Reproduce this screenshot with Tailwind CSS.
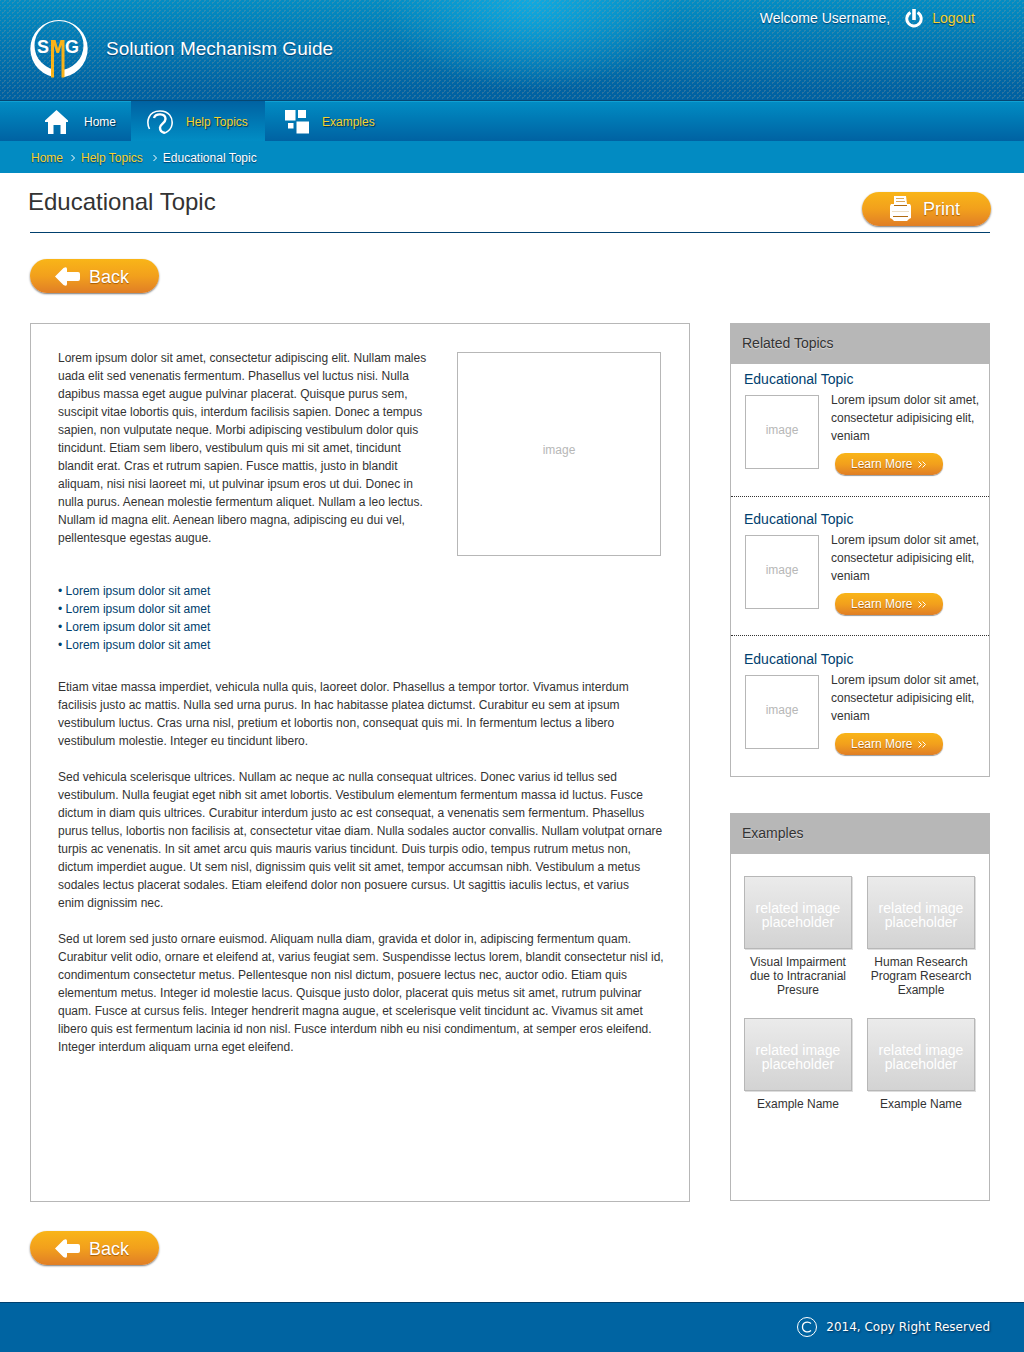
<!DOCTYPE html>
<html lang="en">
<head>
<meta charset="utf-8">
<meta name="viewport" content="width=device-width, initial-scale=1">
<title>Educational Topic - Solution Mechanism Guide</title>
<script src="https://cdn.jsdelivr.net/npm/@tailwindcss/browser@4"></script>
</head>
<body class="flex min-h-screen flex-col bg-white font-['Liberation_Sans',Arial,sans-serif] text-xs leading-[18px] text-[#333]">

<header>
  <div class="flex h-[101px] items-start justify-between border-b border-[#064672] pr-[49px] pl-[30px] [background-image:radial-gradient(circle,#8a9a9a50_1px,transparent_1px),radial-gradient(circle,#8a9a9a50_1px,transparent_1px),radial-gradient(ellipse_150px_90px_at_52%_0,#10a9e0,#10a9e080_50%,transparent),linear-gradient(#028dc4,#0062a2_90%)] [background-position:0_0,2px_3px,0_0,0_0] [background-size:5px_5px,5px_5px,auto,auto]">
    <a href="#" class="flex items-center gap-[18px] pt-5 text-[19px] leading-6 text-white">
      <svg class="h-[58px] w-[58px]" viewBox="0 0 58 58" role="img" aria-label="SMG">
        <clipPath id="legs"><path d="M0 0H58V58H34V44H22V58H0Z"/></clipPath>
        <path clip-path="url(#legs)" fill="#fff" fill-rule="evenodd" d="M29 0a28.700 28.700 0 1 1 0 57.400A28.700 28.700 0 1 1 29 0Zm0 1a24.500 24.500 0 1 0 0 49A24.500 24.500 0 1 0 29 1Z"/>
        <text x="7" y="33" font-size="18" font-weight="700" fill="#fff">S</text>
        <text x="35" y="33" font-size="18" font-weight="700" fill="#fff">G</text>
        <path fill="#f9b218" d="M21 20h4.500l2.500 8.500L30.500 20h4v37.500h-3V25L29 33h-2.500L24 25v32.500h-3Z"/>
      </svg>
      <span class="[text-shadow:0_1px_1px_#003f6f]">Solution Mechanism Guide</span>
    </a>
    <div class="flex items-center pt-2 text-sm leading-5 text-white [text-shadow:0_1px_1px_#003f6f]">
      <span>Welcome Username,</span>
      <a href="#" class="ml-[15px] flex items-center gap-[9px] text-[#f5d330]">
        <svg class="h-5 w-[18px]" viewBox="0 0 18 20" fill="none" stroke="#fff" aria-hidden="true"><path stroke-width="3" d="M5.500 4.500a7.200 7.200 0 1 0 7 0"/><path stroke-width="3.600" d="M9 1v11"/></svg>
        Logout
      </a>
    </div>
  </div>

  <nav aria-label="Main" class="flex h-10 bg-linear-to-b from-[#028dc4] to-[#0062a2] pl-[30px] text-[#f5d330] shadow-[inset_0_1px_0_#10a0d3] [text-shadow:1px_1px_1px_#003050]">
    <a href="#" class="flex w-[101px] items-center gap-[15px] pt-px pl-[15px] text-white">
      <svg class="h-6 w-6" viewBox="0 0 24 24" fill="#fff" aria-hidden="true"><path d="M11.500 0 23 10.500V12h-2v12h-5.500v-9H8.500v9H3V12H0v-1.500Z"/></svg>
      Home
    </a>
    <a href="#" aria-current="page" class="flex w-[134px] items-center gap-3 bg-linear-to-b from-[#0062a2] to-[#028dc4] pt-px pl-4">
      <svg class="h-6 w-[27px]" viewBox="0 0 27 24" fill="none" stroke="#fff" aria-hidden="true"><path stroke-width="1.600" d="M2.500 19C-1 12 1 1 13 1c9 0 13 6.500 12 13.500-.6 4.500-4 7-7 8.500"/><path stroke-width="2.400" d="M7 8c1.500-5 11.500-5 11.500 1 0 4-5.500 5-5.500 8.500 0 3.500 2 5 5 5.500"/></svg>
      Help Topics
    </a>
    <a href="#" class="flex items-center gap-[13px] pt-px pl-5">
      <svg class="h-6 w-6" viewBox="0 0 24 24" fill="#fff" aria-hidden="true"><path d="M0 0h10.500v10.500H0zM13 0h8v8h-8zM3 13h5.500v5.500H3zM11.500 11.500H24V23.500H11.500z"/></svg>
      Examples
    </a>
  </nav>

  <nav aria-label="Breadcrumb" class="flex h-8 items-center bg-[#028bc2] pt-px pl-[31px] text-[#f5d330] [text-shadow:0_1px_1px_#003f6f]">
    <a href="#">Home</a>
    <svg class="mr-1.5 ml-2 h-2 w-1" viewBox="0 0 4 8" fill="none" stroke="#fff" aria-hidden="true"><path d="M.5 1l3 3-3 3"/></svg>
    <a href="#">Help Topics</a>
    <svg class="mr-1.5 ml-2.5 h-2 w-1" viewBox="0 0 4 8" fill="none" stroke="#fff" aria-hidden="true"><path d="M.5 1l3 3-3 3"/></svg>
    <span class="text-white" aria-current="page">Educational Topic</span>
  </nav>
</header>

<main class="grow pr-[34px] pl-[30px]">
  <div class="flex h-[60px] items-center justify-between border-b border-[#00406e]">
    <h1 class="-ml-0.5 pb-0.5 text-2xl leading-8 text-[#333]">Educational Topic</h1>
    <button type="button" class="mt-3 -mr-px flex h-[34px] w-[129px] items-center gap-3 rounded-full bg-linear-to-b from-[#f9b518] via-[#f2a01c] to-[#e07e25] pl-7 text-lg leading-6 text-white shadow-[0_1px_2px_#0008] [text-shadow:0_1px_1px_#a85b00]">
      <svg class="h-[26px] w-[21px]" viewBox="0 0 21 26" aria-hidden="true"><path fill="#fff" d="M4 0h12l1 8h3l1 2v12l-2 1-2 2H4l-2-2-2-1V10l1-2h3Z"/><path stroke="#dba85c" d="M6 2.500h8M6 5.500h9"/><path stroke="#eedfc4" d="M2 15.500h17"/><path stroke="#b06a10" d="M4 9.500h13M3 20.500h15"/></svg>
      Print
    </button>
  </div>

  <button type="button" class="mt-[26px] flex h-[34px] w-[129px] items-center gap-2 rounded-full bg-linear-to-b from-[#f9b518] via-[#f2a01c] to-[#e07e25] pt-px pl-[25px] text-lg leading-6 text-white shadow-[0_1px_2px_#0008] [text-shadow:0_1px_1px_#a85b00]">
    <svg class="h-5 w-[26px]" viewBox="0 0 26 20" aria-hidden="true"><path fill="#fff" d="M0 9.500 8.500 1q3.500-2 3.500 1v3h11q2 0 2 2v5q0 2-2 2H12v3q0 3-3.500 1Z"/></svg>
    Back
  </button>

  <div class="mt-[30px] flex items-start gap-10">
    <article class="min-h-[879px] min-w-0 grow border border-[#b7b7b7] px-[27px] pt-[25px] pb-12">
      <div class="flex items-start justify-between">
        <p>Lorem ipsum dolor sit amet, consectetur adipiscing elit. Nullam males<br>uada elit sed venenatis fermentum. Phasellus vel luctus nisi. Nulla<br>dapibus massa eget augue pulvinar placerat. Quisque purus sem,<br>suscipit vitae lobortis quis, interdum facilisis sapien. Donec a tempus<br>sapien, non vulputate neque. Morbi adipiscing vestibulum dolor quis<br>tincidunt. Etiam sem libero, vestibulum quis mi sit amet, tincidunt<br>blandit erat. Cras et rutrum sapien. Fusce mattis, justo in blandit<br>aliquam, nisi nisi laoreet mi, ut pulvinar ipsum eros ut dui. Donec in<br>nulla purus. Aenean molestie fermentum aliquet. Nullam a leo lectus.<br>Nullam id magna elit. Aenean libero magna, adipiscing eu dui vel,<br>pellentesque egestas augue.</p>
        <div class="mt-[3px] mr-px flex h-[204px] w-[204px] shrink-0 items-center justify-center border border-[#b7b7b7] pb-2 text-[#b7b7b7]">image</div>
      </div>
      <ul class="mt-[26px] text-[#00406e]">
        <li>• <a href="#">Lorem ipsum dolor sit amet</a></li>
        <li>• <a href="#">Lorem ipsum dolor sit amet</a></li>
        <li>• <a href="#">Lorem ipsum dolor sit amet</a></li>
        <li>• <a href="#">Lorem ipsum dolor sit amet</a></li>
      </ul>
      <div class="-mr-4 mt-6 space-y-[18px]">
        <p>Etiam vitae massa imperdiet, vehicula nulla quis, laoreet dolor. Phasellus a tempor tortor. Vivamus interdum<br>facilisis justo ac mattis. Nulla sed urna purus. In hac habitasse platea dictumst. Curabitur eu sem at ipsum<br>vestibulum luctus. Cras urna nisl, pretium et lobortis non, consequat quis mi. In fermentum lectus a libero<br>vestibulum molestie. Integer eu tincidunt libero.</p>
        <p>Sed vehicula scelerisque ultrices. Nullam ac neque ac nulla consequat ultrices. Donec varius id tellus sed<br>vestibulum. Nulla feugiat eget nibh sit amet lobortis. Vestibulum elementum fermentum massa id luctus. Fusce<br>dictum in diam quis ultrices. Curabitur interdum justo ac est consequat, a venenatis sem fermentum. Phasellus<br>purus tellus, lobortis non facilisis at, consectetur vitae diam. Nulla sodales auctor convallis. Nullam volutpat ornare<br>turpis ac venenatis. In sit amet arcu quis mauris varius tincidunt. Duis turpis odio, tempus rutrum metus non,<br>dictum imperdiet augue. Ut sem nisl, dignissim quis velit sit amet, tempor accumsan nibh. Vestibulum a metus<br>sodales lectus placerat sodales. Etiam eleifend dolor non posuere cursus. Ut sagittis iaculis lectus, et varius<br>enim dignissim nec.</p>
        <p>Sed ut lorem sed justo ornare euismod. Aliquam nulla diam, gravida et dolor in, adipiscing fermentum quam.<br>Curabitur velit odio, ornare et eleifend at, varius feugiat sem. Suspendisse lectus lorem, blandit consectetur nisl id,<br>condimentum consectetur metus. Pellentesque non nisl dictum, posuere lectus nec, auctor odio. Etiam quis<br>elementum metus. Integer id molestie lacus. Quisque justo dolor, placerat quis metus sit amet, rutrum pulvinar<br>quam. Fusce at cursus felis. Integer hendrerit magna augue, et scelerisque velit tincidunt ac. Vivamus sit amet<br>libero quis est fermentum lacinia id non nisl. Fusce interdum nibh eu nisi condimentum, at semper eros eleifend.<br>Integer interdum aliquam urna eget eleifend.</p>
      </div>
    </article>

    <aside class="flex w-[260px] shrink-0 flex-col gap-9">
      <section class="border border-[#b7b7b7]">
        <h2 class="flex h-10 items-center bg-[#b7b7b7] pb-0.5 pl-[11px] text-sm text-[#333] [text-shadow:0_1px_1px_#ddd]">Related Topics</h2>
        <div class="divide-y divide-dotted divide-[#333]">
          <div class="h-[133px] pt-[6px] pl-[13px]">
            <h3 class="text-sm leading-[18px] text-[#00406e]">Educational Topic</h3>
            <div class="flex gap-3 pl-px">
              <div class="mt-[7px] flex h-[74px] w-[74px] shrink-0 items-center justify-center border border-[#b7b7b7] pb-1 text-[#b7b7b7]">image</div>
              <div class="pt-[3px]">
                <p>Lorem ipsum dolor sit amet,<br>consectetur adipisicing elit,<br>veniam</p>
                <button type="button" class="mt-2 ml-1 flex h-[22px] w-[108px] items-center gap-1.5 rounded-[10px] bg-linear-to-b from-[#f9b518] via-[#f2a01c] to-[#e07e25] pl-4 text-white shadow-[0_1px_1px_#0006] [text-shadow:0_1px_1px_#a85b00]">Learn More <svg class="h-[7px] w-2" viewBox="0 0 8 7" fill="none" stroke="#fff" aria-hidden="true"><path d="M.5.5l3 3-3 3M4.500.5l3 3-3 3"/></svg></button>
              </div>
            </div>
          </div>
          <div class="h-[139px] pt-[13px] pl-[13px]">
            <h3 class="text-sm leading-[18px] text-[#00406e]">Educational Topic</h3>
            <div class="flex gap-3 pl-px">
              <div class="mt-[7px] flex h-[74px] w-[74px] shrink-0 items-center justify-center border border-[#b7b7b7] pb-1 text-[#b7b7b7]">image</div>
              <div class="pt-[3px]">
                <p>Lorem ipsum dolor sit amet,<br>consectetur adipisicing elit,<br>veniam</p>
                <button type="button" class="mt-2 ml-1 flex h-[22px] w-[108px] items-center gap-1.5 rounded-[10px] bg-linear-to-b from-[#f9b518] via-[#f2a01c] to-[#e07e25] pl-4 text-white shadow-[0_1px_1px_#0006] [text-shadow:0_1px_1px_#a85b00]">Learn More <svg class="h-[7px] w-2" viewBox="0 0 8 7" fill="none" stroke="#fff" aria-hidden="true"><path d="M.5.5l3 3-3 3M4.500.5l3 3-3 3"/></svg></button>
              </div>
            </div>
          </div>
          <div class="h-[140px] pt-[14px] pl-[13px]">
            <h3 class="text-sm leading-[18px] text-[#00406e]">Educational Topic</h3>
            <div class="flex gap-3 pl-px">
              <div class="mt-[7px] flex h-[74px] w-[74px] shrink-0 items-center justify-center border border-[#b7b7b7] pb-1 text-[#b7b7b7]">image</div>
              <div class="pt-[3px]">
                <p>Lorem ipsum dolor sit amet,<br>consectetur adipisicing elit,<br>veniam</p>
                <button type="button" class="mt-2 ml-1 flex h-[22px] w-[108px] items-center gap-1.5 rounded-[10px] bg-linear-to-b from-[#f9b518] via-[#f2a01c] to-[#e07e25] pl-4 text-white shadow-[0_1px_1px_#0006] [text-shadow:0_1px_1px_#a85b00]">Learn More <svg class="h-[7px] w-2" viewBox="0 0 8 7" fill="none" stroke="#fff" aria-hidden="true"><path d="M.5.5l3 3-3 3M4.500.5l3 3-3 3"/></svg></button>
              </div>
            </div>
          </div>
        </div>
      </section>

      <section class="min-h-[388px] border border-[#b7b7b7]">
        <h2 class="flex h-10 items-center bg-[#b7b7b7] pb-0.5 pl-[11px] text-sm text-[#333] [text-shadow:0_1px_1px_#ddd]">Examples</h2>
        <div class="grid grid-cols-2 gap-x-[15px] gap-y-[21px] pt-[22px] pr-[14px] pb-6 pl-[13px] text-center leading-[14px]">
          <a href="#"><span class="mb-[6px] flex h-[73px] items-center justify-center border border-[#b7b7b7] bg-linear-to-b from-[#ebebeb] to-[#d3d3d3] pt-1 text-sm leading-[14px] text-white shadow-[1px_1px_0_#ddd]">related image<br>placeholder</span>Visual Impairment<br>due to Intracranial<br>Presure</a>
          <a href="#"><span class="mb-[6px] flex h-[73px] items-center justify-center border border-[#b7b7b7] bg-linear-to-b from-[#ebebeb] to-[#d3d3d3] pt-1 text-sm leading-[14px] text-white shadow-[1px_1px_0_#ddd]">related image<br>placeholder</span>Human Research<br>Program Research<br>Example</a>
          <a href="#"><span class="mb-[6px] flex h-[73px] items-center justify-center border border-[#b7b7b7] bg-linear-to-b from-[#ebebeb] to-[#d3d3d3] pt-1 text-sm leading-[14px] text-white shadow-[1px_1px_0_#ddd]">related image<br>placeholder</span>Example Name</a>
          <a href="#"><span class="mb-[6px] flex h-[73px] items-center justify-center border border-[#b7b7b7] bg-linear-to-b from-[#ebebeb] to-[#d3d3d3] pt-1 text-sm leading-[14px] text-white shadow-[1px_1px_0_#ddd]">related image<br>placeholder</span>Example Name</a>
        </div>
      </section>
    </aside>
  </div>

  <button type="button" class="mt-[29px] mb-9 flex h-[34px] w-[129px] items-center gap-2 rounded-full bg-linear-to-b from-[#f9b518] via-[#f2a01c] to-[#e07e25] pt-px pl-[25px] text-lg leading-6 text-white shadow-[0_1px_2px_#0008] [text-shadow:0_1px_1px_#a85b00]">
    <svg class="h-5 w-[26px]" viewBox="0 0 26 20" aria-hidden="true"><path fill="#fff" d="M0 9.500 8.500 1q3.500-2 3.500 1v3h11q2 0 2 2v5q0 2-2 2H12v3q0 3-3.500 1Z"/></svg>
    Back
  </button>
</main>

<footer class="flex h-[50px] items-center justify-end gap-[9px] border-t border-[#00406e] bg-[#0064a2] pr-[34px] pb-0.5 font-['DejaVu_Sans',Verdana,sans-serif] text-xs text-white [text-shadow:1px_1px_2px_#002b50]">
  <svg class="h-5 w-5" viewBox="0 0 20 20" fill="none" stroke="#fff" aria-hidden="true"><circle cx="10" cy="10" r="9.500"/><path stroke-width="1.300" d="M14 6.500C11 4 5.500 5 5.500 10s5.500 6 8.500 3.500"/></svg>
  2014, Copy Right Reserved
</footer>
</body>
</html>
